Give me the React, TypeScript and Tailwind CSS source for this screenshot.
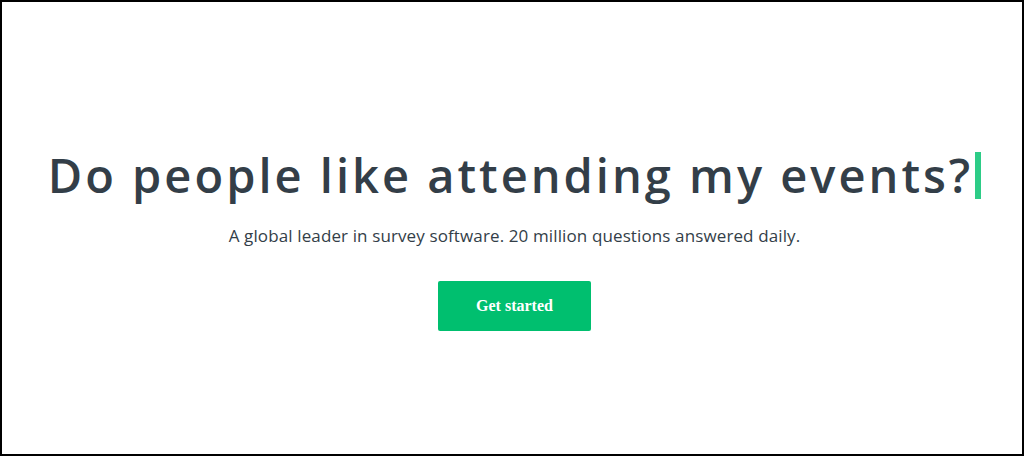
export default function App() {
  return (
    <div className="w-[1024px] h-[456px] border-2 border-black bg-white flex flex-col items-center pl-[5px] font-['Open_Sans',sans-serif] text-[#333e48]">
      <h1 className="mt-[143px] text-[47px] leading-[60px] font-semibold tracking-[3px] flex items-center">
        <span>Do people like attending my events?</span>
        <span className="ml-[2px] w-[6px] h-[47px] bg-[#2dcc87]" />
      </h1>
      <p className="mt-[20px] text-[17px] leading-[22px] tracking-[0.12px]">
        A global leader in survey software. 20 million questions answered daily.
      </p>
      <button className="mt-[34px] w-[153px] h-[50px] bg-[#00bf6f] rounded-[2px] text-white font-bold text-[16px] font-['Liberation_Serif',serif]">
        Get started
      </button>
    </div>
  );
}
